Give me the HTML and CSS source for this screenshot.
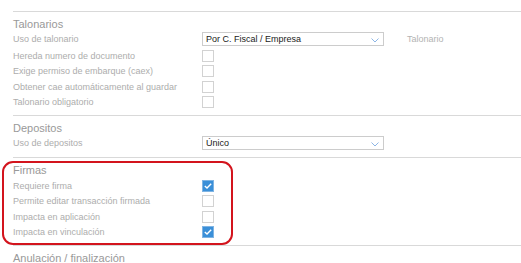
FILE: index.html
```html
<!DOCTYPE html>
<html lang="es">
<head>
    <meta charset="UTF-8">
    <meta name="viewport" content="width=device-width, initial-scale=1.0">
    <title>Configuración de transacción</title>
    <link rel="stylesheet" href="styles.css">
</head>
<body>
    <div class="form">
        <section class="group">
            <h2 class="group-title">Talonarios</h2>
            <div class="row row-select">
                <span class="label">Uso de talonario</span>
                <div class="select">
                    <span class="select-value">Por C. Fiscal / Empresa</span>
                    <svg class="chevron" width="8" height="5" viewBox="0 0 8 5"><polyline points="0.5,0.5 4,4 7.5,0.5" fill="none" stroke="#8db6e6" stroke-width="1"/></svg>
                </div>
                <span class="hint">Talonario</span>
            </div>
            <div class="row">
                <span class="label">Hereda numero de documento</span>
                <span class="check"></span>
            </div>
            <div class="row">
                <span class="label">Exige permiso de embarque (caex)</span>
                <span class="check"></span>
            </div>
            <div class="row">
                <span class="label">Obtener cae automáticamente al guardar</span>
                <span class="check"></span>
            </div>
            <div class="row">
                <span class="label">Talonario obligatorio</span>
                <span class="check"></span>
            </div>
        </section>

        <section class="group">
            <h2 class="group-title">Depositos</h2>
            <div class="row row-select">
                <span class="label">Uso de depositos</span>
                <div class="select">
                    <span class="select-value">Único</span>
                    <svg class="chevron" width="8" height="5" viewBox="0 0 8 5"><polyline points="0.5,0.5 4,4 7.5,0.5" fill="none" stroke="#8db6e6" stroke-width="1"/></svg>
                </div>
            </div>
        </section>

        <section class="group group-marked">
            <h2 class="group-title">Firmas</h2>
            <div class="row">
                <span class="label">Requiere firma</span>
                <span class="check on"><svg width="8" height="6" viewBox="0 0 8 6"><polyline points="0.8,3 3,5 7.2,0.8" fill="none" stroke="#fff" stroke-width="1.4"/></svg></span>
            </div>
            <div class="row">
                <span class="label">Permite editar transacción firmada</span>
                <span class="check"></span>
            </div>
            <div class="row">
                <span class="label">Impacta en aplicación</span>
                <span class="check"></span>
            </div>
            <div class="row">
                <span class="label">Impacta en vinculación</span>
                <span class="check on"><svg width="8" height="6" viewBox="0 0 8 6"><polyline points="0.8,3 3,5 7.2,0.8" fill="none" stroke="#fff" stroke-width="1.4"/></svg></span>
            </div>
        </section>

        <section class="group">
            <h2 class="group-title">Anulación / finalización</h2>
        </section>
    </div>
</body>
</html>
```

FILE: styles.css
```css
body {
    margin: 0;
    font-family: "Liberation Sans", Arial, sans-serif;
    background-color: #fff;
}
.form {
    padding: 11px 0 0 13px;
}
.group {
    border-top: 1px solid #d9d9d9;
    padding: 4px 0 5px;
}
.group-title {
    margin: 0;
    font-size: 11px;
    line-height: 16px;
    font-weight: normal;
    color: #999999;
}
.row {
    display: grid;
    grid-template-columns: 189px 182px auto;
    align-items: center;
    height: 15.5px;
}
.row-select {
    height: 16px;
    align-items: start;
}
.label {
    font-size: 9px;
    line-height: 14px;
    color: #adadad;
}
.select {
    height: 14px;
    box-sizing: border-box;
    border: 1px solid #cccccc;
    display: flex;
    align-items: center;
    justify-content: space-between;
    padding: 0 4px 0 3px;
    font-size: 9px;
    color: #1a1a1a;
}
.chevron {
    margin-top: 2px;
}
.hint {
    margin-left: 23px;
    font-size: 9px;
    line-height: 14px;
    color: #b3b3b3;
}
.check {
    width: 12px;
    height: 12px;
    box-sizing: border-box;
    border: 1px solid #d2d2d2;
    background-color: #fff;
}
.check.on {
    display: flex;
    align-items: center;
    justify-content: center;
    background-color: #3a8fd8;
    border-color: #7fb4e3;
}
.group-marked {
    position: relative;
}
.group-marked::after {
    content: "";
    position: absolute;
    left: -11px;
    top: 3px;
    width: 231px;
    bottom: 0;
    box-sizing: border-box;
    border: 2px solid #d3141d;
    border-radius: 11px;
}
```
